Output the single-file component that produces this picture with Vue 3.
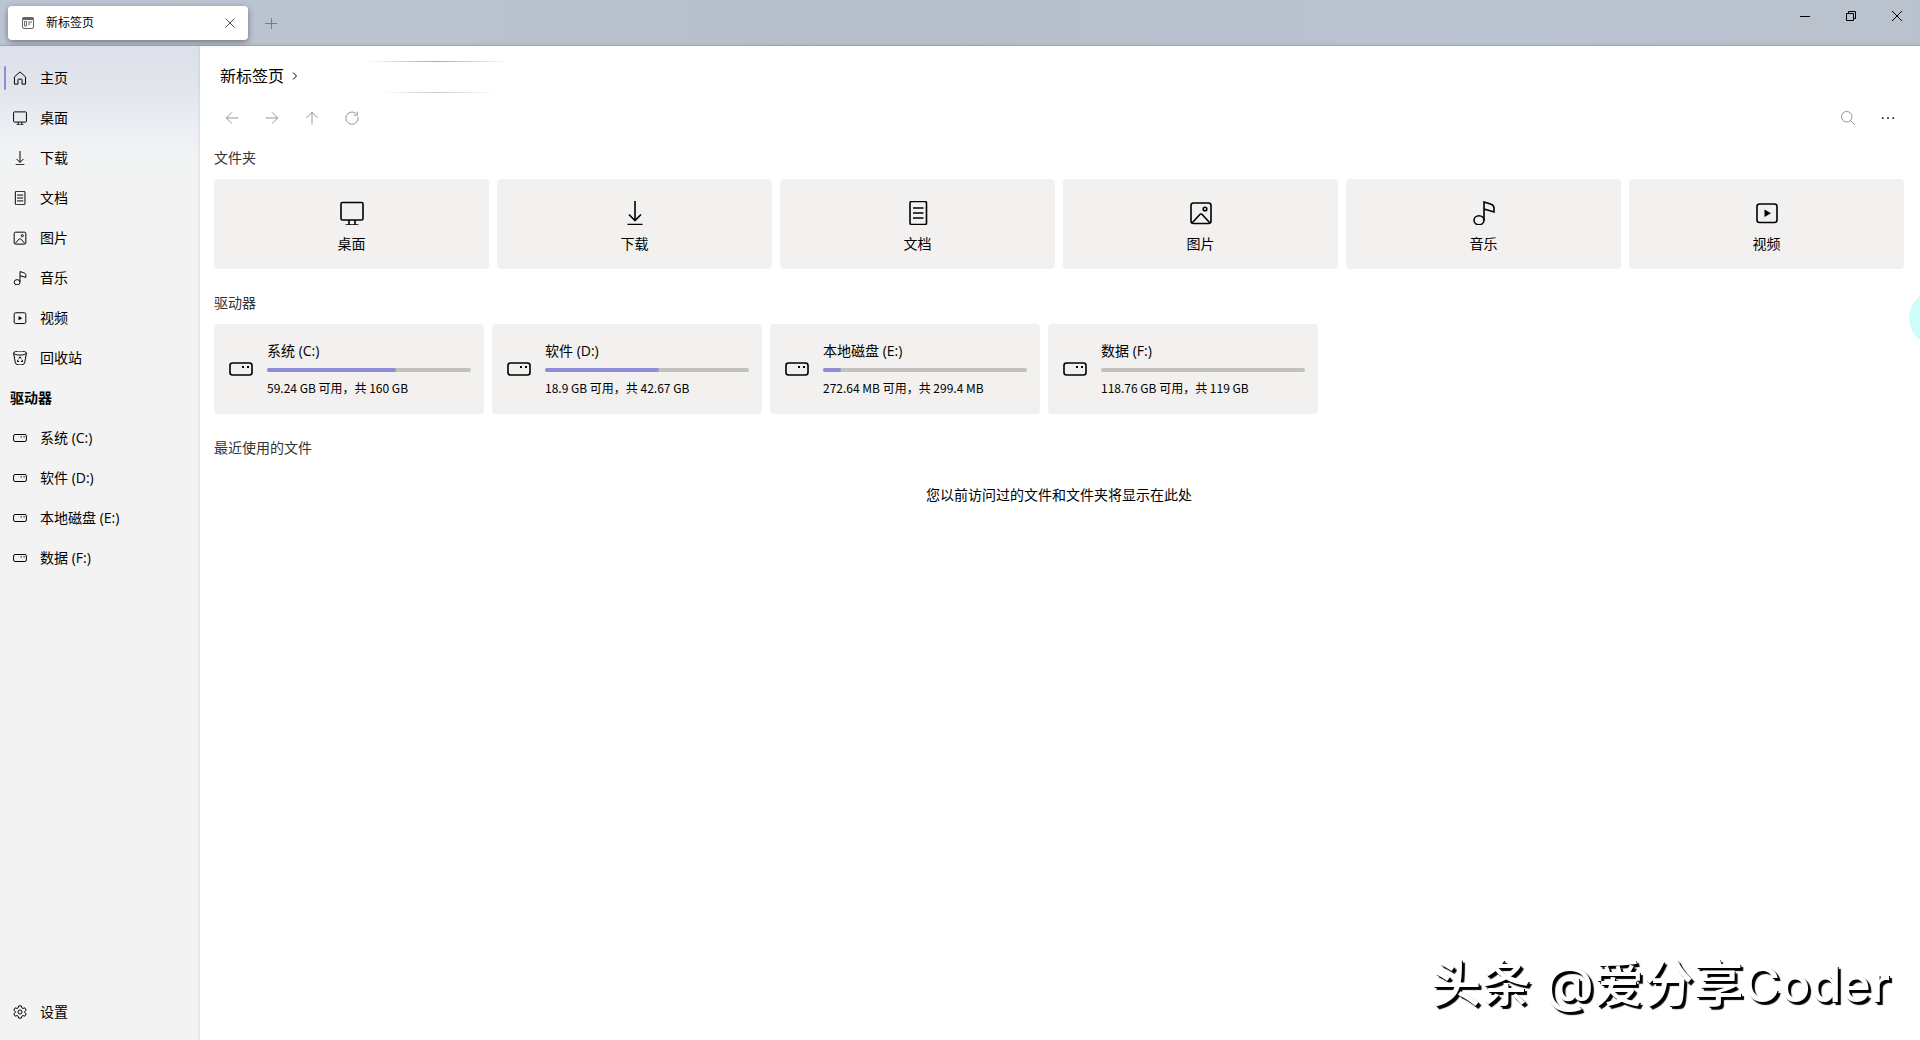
<script setup>
import {ref} from 'vue';

const places = [
    {icon: 'home', name: '主页'},
    {icon: 'desktop', name: '桌面'},
    {icon: 'download', name: '下载'},
    {icon: 'document', name: '文档'},
    {icon: 'picture', name: '图片'},
    {icon: 'music', name: '音乐'},
    {icon: 'video', name: '视频'},
    {icon: 'recycle', name: '回收站'},
];

const folders = places.slice(1, 7);

const drives = [
    {name: '系统 (C:)', info: '59.24 GB 可用，共 160 GB', used: 63},
    {name: '软件 (D:)', info: '18.9 GB 可用，共 42.67 GB', used: 56},
    {name: '本地磁盘 (E:)', info: '272.64 MB 可用，共 299.4 MB', used: 9},
    {name: '数据 (F:)', info: '118.76 GB 可用，共 119 GB', used: 0},
];

const tools = [
    {icon: 'back', label: '后退'},
    {icon: 'forward', label: '前进'},
    {icon: 'up', label: '向上'},
    {icon: 'refresh', label: '刷新'},
];

const active = ref('主页');
</script>

<template>
    <svg class="sprite" aria-hidden="true">
        <symbol id="home" viewBox="0 0 24 24">
            <path d="M2.500 10 12 1.500 21.500 10v12.500H15.500V15a1 1 0 0 0-1-1h-5a1 1 0 0 0-1 1v7.500h-6z" />
        </symbol>
        <symbol id="desktop" viewBox="0 0 24 24">
            <rect x="1" y="1.500" width="22" height="17.500" rx="1.500" />
            <path d="M9 19v5M15 19v5M5.500 24h13" />
        </symbol>
        <symbol id="download" viewBox="0 0 24 24">
            <path d="M12 0v19.500M6 13.500l6 6 6-6M4.500 23.500h15" />
        </symbol>
        <symbol id="document" viewBox="0 0 24 24">
            <rect x="4" y="0.500" width="16.500" height="23" rx="1.500" />
            <path d="M7 7h10.500M7 12h10.500M7 17h10.500" />
        </symbol>
        <symbol id="picture" viewBox="0 0 24 24">
            <rect x="2" y="2" width="20" height="20.500" rx="2.500" />
            <path d="m3.500 21.500 7.300-8a1.600 1.600 0 0 1 2.400 0l7.300 8" />
            <circle cx="16" cy="8" r="1.800" />
        </symbol>
        <symbol id="music" viewBox="0 0 24 24">
            <ellipse cx="7" cy="19.300" rx="5" ry="4.500" />
            <path d="M12 19.300V1l6.500 2c2.500.8 3.500 2 3.500 4.200V11L12 8" />
        </symbol>
        <symbol id="video" viewBox="0 0 24 24">
            <rect x="2" y="3" width="20" height="18.500" rx="2.500" />
            <path class="solid" d="M9.500 8.500v7.500l6.500-3.700z" />
        </symbol>
        <symbol id="recycle" viewBox="0 0 24 24">
            <ellipse cx="12" cy="3.500" rx="11" ry="3.500" />
            <path d="m1 3.500 3 17C5 25 19 25 20 20.500l3-17" />
            <path d="m10 13 2-3 2 3M8.500 15l-1 3h3M15.500 15l1.200 3h-3" />
        </symbol>
        <symbol id="drive" viewBox="0 0 24 24">
            <rect x="1" y="6" width="22" height="12" rx="2.500" />
            <path class="solid" d="M13 9h2v2h-2zM18 9h2v2h-2z" />
        </symbol>
        <symbol id="settings" viewBox="0 0 24 24">
            <circle cx="12" cy="12" r="3.500" />
            <path d="m9.600 1.500-.7 3.400-1.800 1-3.300-1.100-2.400 4.100 2.600 2.300v1.600l-2.600 2.300 2.400 4.100 3.300-1.100 1.800 1 .7 3.400h4.800l.7-3.400 1.800-1 3.300 1.100 2.400-4.100-2.600-2.300v-1.600l2.600-2.300-2.400-4.100-3.300 1.100-1.800-1-.7-3.400z" />
        </symbol>
        <symbol id="back" viewBox="0 0 16 16"><path d="M15.500 8H1.500M8 1.500 1.500 8 8 14.500" /></symbol>
        <symbol id="forward" viewBox="0 0 16 16"><path d="M.5 8h14M8 1.500 14.500 8 8 14.500" /></symbol>
        <symbol id="up" viewBox="0 0 16 16"><path d="M8 15.500V1.500M1.500 8 8 1.500 14.500 8" /></symbol>
        <symbol id="refresh" viewBox="0 0 16 16">
            <path d="M12.500 2.800A7 7 0 1 0 14.800 6.500M14 .8v4h-4" />
        </symbol>
        <symbol id="search" viewBox="0 0 16 16">
            <circle cx="6.500" cy="6.500" r="6" /><path d="m10.800 10.800 5 5" />
        </symbol>
        <symbol id="more" viewBox="0 0 16 16">
            <path class="solid" d="M1 7h2v2H1zM7 7h2v2H7zM13 7h2v2h-2z" />
        </symbol>
    </svg>

    <div class="window">
        <header class="titlebar">
            <div class="tab">
                <svg class="tab-icon" viewBox="0 0 12 12">
                    <rect x="0.500" y="0.500" width="11" height="11" rx="1.500" />
                    <path class="solid" d="M0.500 0.500h11v2.500h-11z" />
                    <path d="M2.500 4.500h2v4.500h-2zM6 5h4M6 7h2.500" />
                </svg>
                <span class="tab-title">新标签页</span>
                <button class="tab-close" aria-label="关闭标签页">
                    <svg viewBox="0 0 10 10"><path d="m.5.5 9 9M9.500.5l-9 9" /></svg>
                </button>
            </div>
            <button class="tab-add" aria-label="新建标签页">
                <svg viewBox="0 0 12 12"><path d="M0 6.500h12M6.500 1v11" /></svg>
            </button>
            <div class="window-buttons">
                <button aria-label="最小化">
                    <svg viewBox="0 0 10 10"><path d="M0 5.500h10" /></svg>
                </button>
                <button aria-label="还原">
                    <svg viewBox="0 0 10 10"><path d="M.5 2.500h7v7h-7zM2.500 2.500v-2h7v7h-2" /></svg>
                </button>
                <button aria-label="关闭">
                    <svg viewBox="0 0 10 10"><path d="m0 0 10 10M10 0 0 10" /></svg>
                </button>
            </div>
        </header>

        <div class="body">
            <nav class="sidebar">
                <a
                    v-for="place in places"
                    :key="place.name"
                    href="#"
                    class="nav-item"
                    :class="{ active: active === place.name }"
                    @click.prevent="active = place.name"
                >
                    <svg class="icon"><use :href="'#' + place.icon" /></svg>
                    <span>{{ place.name }}</span>
                </a>
                <h2 class="nav-heading">驱动器</h2>
                <a
                    v-for="drive in drives"
                    :key="drive.name"
                    href="#"
                    class="nav-item"
                    :class="{ active: active === drive.name }"
                    @click.prevent="active = drive.name"
                >
                    <svg class="icon"><use href="#drive" /></svg>
                    <span>{{ drive.name }}</span>
                </a>
                <a href="#" class="nav-item settings" @click.prevent>
                    <svg class="icon"><use href="#settings" /></svg>
                    <span>设置</span>
                </a>
            </nav>

            <main class="main">
                <div class="breadcrumb">
                    <span>新标签页</span>
                    <svg class="chevron" viewBox="0 0 6 8"><path d="m1 0.500 3.500 3.500L1 7.500" /></svg>
                    <div class="glow"></div>
                </div>

                <div class="toolbar">
                    <button v-for="tool in tools" :key="tool.icon" :aria-label="tool.label">
                        <svg class="tool-icon"><use :href="'#' + tool.icon" /></svg>
                    </button>
                    <button class="search" aria-label="搜索">
                        <svg class="tool-icon"><use href="#search" /></svg>
                    </button>
                    <button class="more" aria-label="更多">
                        <svg class="tool-icon"><use href="#more" /></svg>
                    </button>
                </div>

                <section class="section">
                    <h2>文件夹</h2>
                    <div class="folders">
                        <button v-for="folder in folders" :key="folder.name" class="folder">
                            <svg class="icon large"><use :href="'#' + folder.icon" /></svg>
                            <span>{{ folder.name }}</span>
                        </button>
                    </div>
                </section>

                <section class="section">
                    <h2>驱动器</h2>
                    <div class="drives">
                        <button v-for="drive in drives" :key="drive.name" class="drive">
                            <svg class="icon large"><use href="#drive" /></svg>
                            <span class="drive-text">
                                <span>{{ drive.name }}</span>
                                <span class="bar">
                                    <span class="bar-fill" :style="{ width: drive.used + '%' }"></span>
                                </span>
                                <span class="drive-info">{{ drive.info }}</span>
                            </span>
                        </button>
                    </div>
                </section>

                <section class="section">
                    <h2>最近使用的文件</h2>
                    <p class="empty">您以前访问过的文件和文件夹将显示在此处</p>
                </section>
            </main>
        </div>

        <div class="bubble"></div>
        <div class="watermark">头条 @爱分享Coder</div>
    </div>
</template>

<style>
body {
    margin: 0;
}
</style>

<style scoped>
.sprite {
    position: absolute;
    width: 0;
    height: 0;
}

.window {
    position: relative;
    display: flex;
    flex-direction: column;
    min-height: 100vh;
    overflow: hidden;
    background: #fff;
    color: #000;
    font-family: "Open Sans", "Noto Sans CJK SC", sans-serif;
    font-size: 14px;
    line-height: 20px;
}

button {
    display: flex;
    align-items: center;
    justify-content: center;
    padding: 0;
    border: 0;
    background: none;
    color: inherit;
    font: inherit;
}

svg {
    flex: none;
    fill: none;
    stroke: currentColor;
    overflow: visible;
}

.solid {
    fill: currentColor;
    stroke: none;
}

.titlebar {
    display: flex;
    align-items: flex-start;
    height: 46px;
    background: linear-gradient(90deg, #bdc5d3 0%, #bac2cd 25%, #b6bec9 45%, #bac2d0 70%, #b9c2cd 100%);
    box-shadow: inset 0 -2px 2px -1px rgba(90, 100, 120, 0.35);
}

.tab {
    display: flex;
    align-items: center;
    box-sizing: border-box;
    width: 240px;
    height: 34px;
    margin: 6px 0 0 8px;
    padding: 0 8px 0 14px;
    border-radius: 4px;
    background: #fff;
    box-shadow: 0 2px 6px rgba(0, 0, 0, 0.4);
}

.tab-icon {
    width: 12px;
    height: 12px;
    color: #666;
}

.tab-title {
    flex: 1;
    margin-left: 12px;
    font-size: 12px;
}

.tab-close {
    width: 20px;
    height: 20px;
    color: #555;
}

.tab-close svg {
    width: 10px;
    height: 10px;
}

.tab-add {
    width: 32px;
    height: 34px;
    margin: 6px 0 0 7px;
    color: #777c86;
}

.tab-add svg {
    width: 12px;
    height: 12px;
}

.window-buttons {
    display: flex;
    margin-left: auto;
}

.window-buttons button {
    width: 46px;
    height: 32px;
}

.window-buttons svg {
    width: 10px;
    height: 10px;
}

.body {
    flex: 1;
    display: flex;
}

.sidebar {
    display: flex;
    flex-direction: column;
    flex: none;
    box-sizing: border-box;
    width: 200px;
    padding: 12px 0 8px;
    background: linear-gradient(180deg, #dce0ea 0, #e3e6ec 50px, #ebeef3 80px, #f2f3f4 110px, #f3f3f3 140px);
    box-shadow: inset -3px 0 3px -2px rgba(0, 0, 0, 0.08);
}

.nav-item {
    position: relative;
    display: flex;
    align-items: center;
    gap: 13px;
    height: 40px;
    padding-left: 13px;
    color: #000;
    text-decoration: none;
}

.nav-item.active::before {
    content: "";
    position: absolute;
    left: 4px;
    top: 8px;
    width: 2px;
    height: 24px;
    border-radius: 1px;
    background: #8e8cd8;
}

.nav-heading {
    margin: 0;
    padding-left: 10px;
    font-size: 14px;
    font-weight: 700;
    line-height: 40px;
}

.settings {
    margin-top: auto;
}

.icon {
    width: 14px;
    height: 14px;
    stroke-width: 1.7;
}

.icon.large {
    width: 24px;
    height: 24px;
    stroke-width: 1.6;
}

.main {
    flex: 1;
    min-width: 0;
    padding-top: 12px;
}

.breadcrumb {
    display: flex;
    align-items: center;
    gap: 8px;
    height: 36px;
    padding-left: 20px;
    font-size: 16px;
}

.chevron {
    width: 6px;
    height: 8px;
}

/* light streaks beside the path */
.glow {
    align-self: flex-end;
    width: 144px;
    height: 32px;
    margin: 0 0 1px 60px;
    background:
        linear-gradient(90deg, transparent, #aaa 50%, transparent) center top / 144px 1px no-repeat,
        linear-gradient(90deg, transparent, #ccc 50%, transparent) center bottom / 118px 1px no-repeat;
}

.toolbar {
    display: flex;
    height: 40px;
    margin: 4px 12px 0;
    color: #858585;
}

.toolbar button {
    width: 40px;
    height: 40px;
}

.tool-icon {
    width: 14px;
    height: 14px;
}

.toolbar .search {
    margin-left: auto;
}

.toolbar .more {
    color: #333;
}

.section {
    margin: 10px 16px 24px 14px;
}

.section + .section {
    margin-top: 0;
}

.section h2 {
    margin: 0 0 11px;
    color: #333;
    font-size: 14px;
    font-weight: 400;
}

.folders {
    display: grid;
    grid-template-columns: repeat(6, 1fr);
    gap: 8px;
}

.folder {
    flex-direction: column;
    gap: 9px;
    height: 90px;
    padding-top: 6px;
    border-radius: 4px;
    background: #f2f1ef;
}

.drives {
    display: flex;
    flex-wrap: wrap;
    gap: 8px;
}

.drive {
    box-sizing: border-box;
    width: 270px;
    height: 90px;
    padding: 0 13px 0 15px;
    gap: 14px;
    border-radius: 4px;
    background: #f2f1ef;
    text-align: left;
}

.drive-text {
    flex: 1;
    display: flex;
    flex-direction: column;
}

.bar {
    height: 4px;
    margin: 7px 0 6px;
    border-radius: 2px;
    background: #c2c1bf;
}

.bar-fill {
    display: block;
    height: 100%;
    border-radius: 2px;
    background: #8e8cd8;
}

.drive-info {
    font-family: "Noto Sans CJK SC", sans-serif;
    font-size: 12px;
}

.empty {
    margin: 27px 0 0;
    text-align: center;
}

.bubble {
    position: absolute;
    top: 290px;
    right: -45px;
    width: 56px;
    height: 56px;
    border-radius: 50%;
    background: #ccfffa;
}

.watermark {
    position: absolute;
    right: 30px;
    bottom: 24px;
    color: #fff;
    font-family: Inter, "Noto Sans CJK SC", sans-serif;
    font-size: 50px;
    font-weight: 500;
    line-height: 64px;
    text-shadow: 1px 1px 0 #000, 3px 3px 1px #000;
}
</style>
